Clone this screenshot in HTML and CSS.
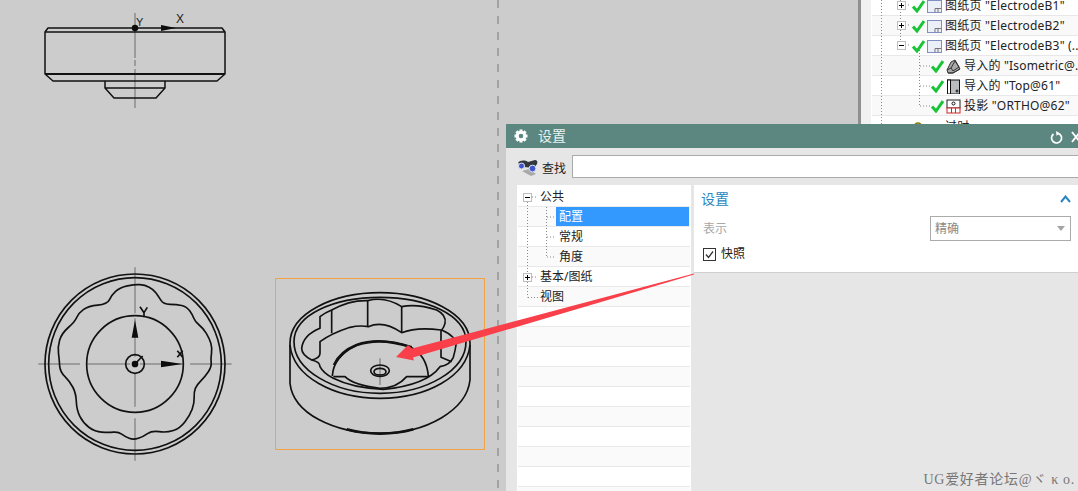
FILE: index.html
```html
<!DOCTYPE html>
<html lang="zh">
<head>
<meta charset="utf-8">
<title>设置</title>
<link rel="stylesheet" href="styles.css">
</head>
<body>
<div class="canvas">
  <svg class="drawing" width="1078" height="491" viewBox="0 0 1078 491">
    <path class="fold" d="M498 0V491"/>

    <g class="axis">
      <path d="M135 13V58M135 60V66M135 69V108"/>
    </g>
    <g class="edge">
      <path d="M45 32L48 28H222L225 32V71L225 74L217 81H53L45 74V32ZM45 32H225"/>
      <path class="heavy" d="M45 74H225"/>
      <path d="M105 81V88L114 98H156L165 88V81M105 88H165"/>
    </g>
    <circle class="solid" cx="135" cy="28" r="3.2"/>
    <path class="solid" d="M161 25L176 28L161 31Z"/>
    <text class="axis-label" x="176" y="23">X</text>
    <text class="axis-label small" x="136" y="26">Y</text>

    <g transform="translate(20 260) scale(.33333)">
      <path class="axis zoomed" d="M55 312H180M200 312H330M360 312H490M510 312H635M345 22V160M345 175V290M345 340V440M345 475V602"/>
      <g class="edge zoomed">
        <circle cx="345" cy="312" r="270"/>
        <circle cx="345" cy="312" r="259"/>
        <circle cx="345" cy="312" r="145"/>
        <circle cx="345" cy="312" r="28"/>
        <path d="M360 74Q375 75 387.5 81.5Q400 88 407.5 98Q415 108 422.5 120.5Q430 133 450 133Q470 133 485 136.5Q500 140 509 152.5Q518 165 521.5 175Q525 185 537.5 195Q550 205 559 220Q568 235 572.5 250Q577 265 574.5 280Q572 295 573.5 307.5Q575 320 565 335Q555 350 542.5 362.5Q530 375 526 385Q522 395 522.5 412.5Q523 430 516.5 447.5Q510 465 495 485Q480 505 460 511.5Q440 518 417.5 515Q395 512 382.5 521Q370 530 355 535Q340 540 327.5 535Q315 530 305 522.5Q295 515 280 516.5Q265 518 245 516.5Q225 515 207.5 502.5Q190 490 180 470Q170 450 169 425Q168 400 159 382.5Q150 365 135 350Q120 335 119 317.5Q118 300 115.5 280Q113 260 119 240Q125 220 145 202.5Q165 185 170 172.5Q175 160 190 149Q205 138 233.5 135.5Q262 133 268.5 119Q275 105 287.5 93.5Q300 82 322.5 77.5Q345 73 360 74Z"/>
        <path d="M345 312L368 288M360 140L372 158L382 142M372 158V172M472 272L488 292M488 272L472 292"/>
      </g>
      <circle class="solid" cx="345" cy="312" r="10"/>
      <path class="solid" d="M345 180L355 233H335ZM423 302L488 312L423 322Z"/>
    </g>

    <rect class="frame" x="275.5" y="278.5" width="209" height="171"/>
    <g transform="translate(270 270) scale(.33333)">
      <path class="axis zoomed" d="M330 265V345"/>
      <g class="edge zoomed">
        <path d="M60 220C60 130 190 68 330 68C470 68 600 130 600 220V330C590 420 470 490 330 490C190 490 70 430 60 340Z"/>
        <path d="M60 225C70 320 190 385 330 385C470 385 590 320 600 225"/>
        <path d="M72 215C72 135 190 82 330 82C470 82 588 135 588 215C588 300 470 370 330 370C190 370 72 300 72 215Z"/>
        <path d="M150 140Q165 128 185 120Q240 90 293 92Q345 78 395 110Q440 100 500 120Q530 135 525 160Q522 172 515 180Q560 200 558 225Q555 245 550 262Q540 285 510 290Q470 345 340 358Q250 355 190 325Q160 310 150 290Q150 275 125 270Q95 255 95 235Q100 195 150 175Z"/>
        <path d="M125 270Q150 265 150 250V215Q185 190 240 172Q270 165 295 170Q340 150 395 188Q440 170 513 180M185 120V190M293 92V170M395 110V188M513 180V262L545 275"/>
        <path d="M187 318Q190 260 260 225Q330 200 420 230Q470 255 475 318"/>
        <path class="heavy-iso" d="M192 285Q210 245 260 225Q330 200 425 232"/>
        <path d="M190 320H225Q250 345 330 355Q380 355 410 320H475"/>
        <ellipse cx="330" cy="302" rx="28" ry="17"/>
        <ellipse cx="330" cy="305" rx="18" ry="10"/>
        <path class="heavy-iso" d="M230 478C290 495 370 495 430 478"/>
      </g>
    </g>
  </svg>

  <section class="outline">
    <div class="outline-row">
      <span class="expander plus"></span>
      <svg class="check" width="13" height="13" viewBox="0 0 13 13"><path d="M1 6.5L5 11L12 1"/></svg>
      <svg class="sheet" width="15" height="13" viewBox="0 0 15 13"><rect x=".5" y=".5" width="14" height="12"/><path d="M8 8.5H14M8 8.5V12M11 8.5V12"/></svg>
      <span>图纸页 "ElectrodeB1"</span>
    </div>
    <div class="outline-row">
      <span class="expander plus"></span>
      <svg class="check" width="13" height="13" viewBox="0 0 13 13"><path d="M1 6.5L5 11L12 1"/></svg>
      <svg class="sheet" width="15" height="13" viewBox="0 0 15 13"><rect x=".5" y=".5" width="14" height="12"/><path d="M8 8.5H14M8 8.5V12M11 8.5V12"/></svg>
      <span>图纸页 "ElectrodeB2"</span>
    </div>
    <div class="outline-row">
      <span class="expander"></span>
      <svg class="check" width="13" height="13" viewBox="0 0 13 13"><path d="M1 6.5L5 11L12 1"/></svg>
      <svg class="sheet" width="15" height="13" viewBox="0 0 15 13"><rect x=".5" y=".5" width="14" height="12"/><path d="M8 8.5H14M8 8.5V12M11 8.5V12"/></svg>
      <span>图纸页 "ElectrodeB3" (..</span>
    </div>
    <div class="outline-row child">
      <svg class="check" width="13" height="13" viewBox="0 0 13 13"><path d="M1 6.5L5 11L12 1"/></svg>
      <svg class="view" width="15" height="15" viewBox="0 0 15 15"><path class="view-fill" d="M1 11L5 3L9 1L13 8L14 10L7 14L2 14Z"/><path d="M5 9L9 2L13 8L7 12ZM1 11L5 9M2 14L7 14L14 10"/></svg>
      <span>导入的 "Isometric@..</span>
    </div>
    <div class="outline-row child">
      <svg class="check" width="13" height="13" viewBox="0 0 13 13"><path d="M1 6.5L5 11L12 1"/></svg>
      <svg class="view" width="15" height="15" viewBox="0 0 15 15"><rect class="view-tall" x="1.5" y="1" width="12" height="14"/><rect class="view-side" x="1.5" y="1" width="3" height="14"/><circle cx="11" cy="12" r="1"/></svg>
      <span>导入的 "Top@61"</span>
    </div>
    <div class="outline-row child">
      <svg class="check" width="13" height="13" viewBox="0 0 13 13"><path d="M1 6.5L5 11L12 1"/></svg>
      <svg class="view ortho" width="15" height="15" viewBox="0 0 15 15"><rect x="1" y="1" width="13" height="8"/><circle cx="7.5" cy="4.5" r="1.5"/><rect class="ortho-red" x="1" y="9" width="13" height="5"/><path class="ortho-red" d="M5.5 9V14M9.5 9V14"/></svg>
      <span>投影 "ORTHO@62"</span>
    </div>
    <div class="outline-row stale">
      <svg class="lamp" width="22" height="12" viewBox="0 0 22 12"><circle cx="5" cy="6" r="4"/><circle cx="15" cy="8" r="3"/></svg>
      <span>过时</span>
    </div>
    <svg class="outline-lines" width="218" height="124" viewBox="0 0 218 124">
      <path d="M20.5 0V124M39.5 9V41M39.5 0V1M58.5 50V106M59 66H69M59 86H69M59 106H69M44 5H50M44 25H50M44 45H50"/>
    </svg>
  </section>

  <section class="dialog">
    <header class="dialog-title">
      <svg class="gear" width="14" height="14" viewBox="0 0 14 14"><circle cx="7" cy="7" r="3.8"/><path d="M7 .5V3M7 11V13.5M.5 7H3M11 7H13.5M2.4 2.4L4 4M10 10L11.6 11.6M11.6 2.4L10 4M4 10L2.4 11.6"/></svg>
      <span class="dialog-name">设置</span>
      <svg class="reset" width="13" height="13" viewBox="0 0 13 13"><path d="M8 2.2A5 5 0 1 1 3.5 3"/><path class="reset-tip" d="M6 0L10 2.4L6.5 4.8Z"/></svg>
      <svg class="close" width="7" height="13" viewBox="0 0 7 13"><path d="M1 1L9 11M9 1L1 11"/></svg>
    </header>
    <div class="search">
      <svg class="binoculars" width="22" height="18" viewBox="0 0 22 18"><path class="bino-shadow" d="M5 12L14 17L19 15L12 10Z"/><path class="bino-body" d="M1 4C3 1 8 1 11 3L18 1C20 1 21 3 20 5L17 9L7 8Z"/><circle class="bino-lens" cx="4.5" cy="7" r="3"/><circle class="bino-lens" cx="15.5" cy="9.5" r="3.4"/></svg>
      <span class="search-label">查找</span>
      <div class="search-input"></div>
    </div>
    <div class="panes">
      <div class="nav">
        <div class="nav-row"><span class="nav-box"></span><span class="nav-top">公共</span></div>
        <div class="nav-row alt"><span class="nav-sub selected">配置</span></div>
        <div class="nav-row"><span class="nav-sub">常规</span></div>
        <div class="nav-row alt"><span class="nav-sub">角度</span></div>
        <div class="nav-row"><span class="nav-box plus"></span><span class="nav-top">基本/图纸</span></div>
        <div class="nav-row alt"><span class="nav-top">视图</span></div>
        <div class="nav-row"></div><div class="nav-row alt"></div>
        <div class="nav-row"></div><div class="nav-row alt"></div>
        <div class="nav-row"></div><div class="nav-row alt"></div>
        <div class="nav-row"></div><div class="nav-row alt"></div>
        <div class="nav-row"></div><div class="nav-row alt"></div>
        <svg class="nav-lines" width="174" height="120" viewBox="0 0 174 120">
          <path d="M10.5 17V88M10.5 97V112.5M15 12H21M29.5 22V72.5M30 32H38M30 52H38M30 72H38M15 92H21M11 112.5H21"/>
        </svg>
      </div>
      <div class="detail">
        <div class="group">
          <div class="group-head">
            <span class="group-title">设置</span>
            <svg class="chevron" width="11" height="8" viewBox="0 0 11 8"><path d="M1 7L5.5 1.5L10 7"/></svg>
          </div>
          <div class="field">
            <span class="field-label">表示</span>
            <div class="select"><span>精确</span><i class="select-arrow"></i></div>
          </div>
          <label class="snapshot">
            <svg class="tick" width="13" height="13" viewBox="0 0 13 13"><rect x=".5" y=".5" width="12" height="12"/><path d="M3 6.5L5.5 9.5L10 3.5"/></svg>
            <span>快照</span>
          </label>
        </div>
      </div>
    </div>
  </section>

  <svg class="arrow" width="1078" height="491" viewBox="0 0 1078 491">
    <path d="M694 273.5L412 348.5L408 345L396 357L414 360.5L413 357.5L694 274.5Z"/>
  </svg>
  <div class="watermark">UG爱好者论坛@ヾ κ o.</div>
</div>
</body>
</html>
```
FILE: styles.css
```css
* { box-sizing: border-box; }
html, body { margin: 0; height: 100%; overflow: hidden; }
body {
  background: #cccccc;
  font: 12px/20px "Noto Sans", "Noto Sans CJK SC", sans-serif;
  color: #222;
}
.canvas { position: relative; width: 1078px; height: 491px; overflow: hidden; }
.drawing, .arrow { position: absolute; left: 0; top: 0; }
.arrow { fill: #f9404a; }

.fold { stroke: #a3a3a3; stroke-width: 2; stroke-dasharray: 8 8; fill: none; }
.axis { stroke: #8c8c8c; stroke-width: 1.5; fill: none; }
.axis.zoomed { stroke-width: 4.5; }
.edge { stroke: #111; stroke-width: 1.5; fill: none; stroke-linejoin: round; }
.edge.zoomed { stroke-width: 5; }
.edge .heavy { stroke-width: 2; }
.edge .heavy-iso { stroke-width: 8; }
.solid { fill: #0c0c0c; }
.axis-label { font: 12px "Liberation Sans", sans-serif; fill: #222; }
.axis-label.small { font-size: 11px; }
.frame { fill: none; stroke: #f3a244; stroke-width: 1; }

.outline {
  position: absolute;
  left: 858px; top: 0;
  width: 220px; height: 124px;
  padding: 0 0 0 13px;
  overflow: hidden;
  background: #fff;
  border-left: 3px solid #8f8f8f;
  box-shadow: inset 10px 0 0 #f1f1f1;
}
.outline-lines {
  position: absolute; left: 0; top: 0;
  stroke: #8a8a8a; stroke-dasharray: 1 2; fill: none;
}
.outline-row {
  position: relative;
  display: flex;
  align-items: center;
  height: 20px;
  padding-top: 1px;
  padding-left: 26px;
  margin-left: -2px;
  white-space: nowrap;
  border-bottom: 1px solid #e8e8e8;
  color: #222;
  letter-spacing: .2px;
}
.outline-row:first-of-type { margin-top: -4px; }
.outline-row:nth-of-type(even) { background: #f9f9f9; }
.outline-row.child { padding-left: 59px; }
.outline-row.stale { padding-left: 41px; border: 0; }
.expander, .nav-box {
  position: absolute; left: 25px; top: 5px; z-index: 2;
  width: 9px; height: 9px;
  border: 1px solid #bdbdbd; background: #fff;
}
.expander::before, .nav-box::before {
  content: "";
  position: absolute; left: 1px; top: 3px;
  width: 5px; height: 1px;
  background: #000;
}
.plus::after {
  content: "";
  position: absolute; left: 3px; top: 1px;
  width: 1px; height: 5px;
  background: #000;
}
.outline-row > .check { margin-left: 14px; margin-right: 2px; flex: none; }
.outline-row.child > .check { margin-left: 0; }
.check path { fill: none; stroke: #19c437; stroke-width: 3; }
.sheet { margin-right: 3px; flex: none; }
.sheet rect { fill: #eceef8; stroke: #7f8fc4; }
.sheet path { fill: none; stroke: #777; }
.view { margin-right: 3px; flex: none; }
.view path { stroke: #333; fill: none; }
.view .view-fill { fill: #a9a9a9; }
.view .view-tall { fill: #b9bdc0; stroke: #111; }
.view .view-side { fill: #fff; stroke: #111; }
.view circle { fill: none; stroke: #111; }
.ortho rect { fill: #fff; stroke: #222; }
.ortho .ortho-red { fill: #fff; stroke: #d12727; }
.lamp { margin-right: 10px; flex: none; }
.lamp circle { fill: #f3e34c; stroke: #8a7a10; stroke-width: 1.5; }

.dialog {
  position: absolute;
  left: 506px; top: 124px;
  width: 572px; height: 367px;
  display: flex;
  flex-direction: column;
  background: #e6e6e6;
}
.dialog-title {
  display: flex;
  align-items: center;
  height: 24px;
  flex: none;
  padding-left: 8px;
  background: #5b8780;
  color: #e9f1ef;
}
.gear { flex: none; margin-right: 10px; }
.gear circle { fill: none; stroke: #fff; stroke-width: 3; }
.gear path { stroke: #fff; stroke-width: 3; }
.dialog-name { font-size: 14px; flex: 1; }
.reset { flex: none; margin-right: 8px; margin-top: 3px; }
.reset path { fill: none; stroke: #fff; stroke-width: 1.7; }
.reset .reset-tip { fill: #fff; stroke: none; }
.close { flex: none; margin-top: 2px; }
.close path { stroke: #fff; stroke-width: 2; fill: none; }

.search {
  display: flex;
  align-items: center;
  height: 37px;
  flex: none;
  padding: 1px 0 0 11px;
}
.binoculars { flex: none; margin-right: 3px; margin-top: 2px; }
.bino-shadow { fill: #a9a9a9; }
.bino-body { fill: #33353f; }
.bino-lens { fill: #3f55c9; stroke: #dfe3f2; stroke-width: 1; }
.search-label { width: 30px; flex: none; margin-top: 3px; }
.search-input {
  flex: 1;
  height: 23px;
  margin-top: -2px;
  background: #fff;
  border: 1px solid #ababab;
  border-right: 0;
}

.panes { display: flex; flex: 1; min-height: 0; padding-left: 11px; gap: 3px; }
.nav {
  position: relative;
  width: 174px;
  flex: none;
  background: #fff;
  padding: 2px 1px 0 1px;
  overflow: hidden;
}
.nav-lines {
  position: absolute; left: 0; top: 0;
  fill: none; stroke: #8a8a8a; stroke-dasharray: 1 2;
}
.nav-row {
  position: relative;
  display: flex;
  align-items: center;
  height: 20px;
  border-bottom: 1px solid #e9e9e9;
  background: #fff;
  color: #222;
}
.nav-row.alt { background: #fafafa; }
.nav-box { left: 5px; top: 6px; }
.nav-top { margin-left: 22px; }
.nav-sub { margin-left: 38px; padding-left: 3px; height: 19px; line-height: 19px; flex: 1; margin-right: 1px; }
.nav-sub.selected { background: #3399ff; color: #fff; }

.detail { flex: 1; min-width: 0; }
.group {
  height: 88px;
  background: #fff;
  border-bottom: 1px solid #cfcfcf;
  padding: 0 7px 0 7px;
}
.group-head {
  display: flex;
  align-items: center;
  justify-content: space-between;
  height: 28px;
}
.group-title { font-size: 14px; color: #2a86bf; }
.chevron path { fill: none; stroke: #2a86bf; stroke-width: 2; }
.field {
  display: flex;
  align-items: center;
  justify-content: space-between;
  height: 31px;
  padding-left: 2px;
  color: #a8a8a8;
}
.select {
  width: 141px;
  height: 25px;
  display: flex;
  align-items: center;
  justify-content: space-between;
  padding: 0 4px;
  border: 1px solid #ababab;
  color: #888;
}
.select-arrow {
  width: 0; height: 0;
  margin-right: 1px;
  border-left: 4px solid transparent;
  border-right: 4px solid transparent;
  border-top: 5px solid #a5a5a5;
}
.snapshot {
  display: flex;
  align-items: center;
  gap: 5px;
  height: 20px;
  padding-left: 2px;
}
.tick rect { fill: #fff; stroke: #333; }
.tick path { fill: none; stroke: #333; stroke-width: 1.3; }

.watermark {
  position: absolute;
  right: 3px; bottom: 2px;
  font: 14px/18px "Liberation Serif", "Noto Sans CJK SC", serif;
  color: #777;
  letter-spacing: .7px;
  white-space: nowrap;
}
```
